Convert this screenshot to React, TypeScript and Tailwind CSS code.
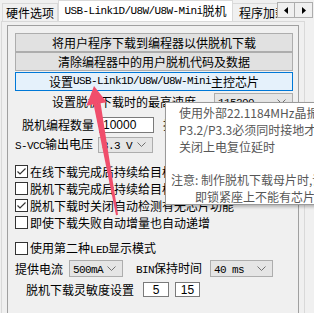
import React from "react";

const CJK = "font-['Noto_Sans_CJK_SC','Noto_Sans',sans-serif]";
const MONO = "font-['Liberation_Mono',monospace]";

function Mono({ children }: { children: React.ReactNode }) {
  return <span className={`${MONO} text-[11px] tracking-[-0.6px]`}>{children}</span>;
}

function Chevron() {
  return (
    <svg width="9" height="6" viewBox="0 0 9 6" className="shrink-0">
      <polyline points="0.5,0.5 4.5,4.5 8.5,0.5" fill="none" stroke="#707070" strokeWidth="1" />
    </svg>
  );
}

function Combo({ children, className }: { children: React.ReactNode; className: string }) {
  return (
    <div
      className={`flex items-center justify-between border border-[#adadad] bg-[#e5e5e5] pl-[3px] pr-[6px] ${className}`}
    >
      <span className="leading-none">{children}</span>
      <Chevron />
    </div>
  );
}

function Check({ checked, label }: { checked?: boolean; label: React.ReactNode }) {
  return (
    <div className="flex h-[17px] items-center gap-[2px] whitespace-nowrap">
      <div className="flex h-[13px] w-[13px] shrink-0 items-center justify-center border border-[#333333] bg-white">
        {checked && (
          <svg width="11" height="11" viewBox="0 0 11 11">
            <polyline points="1.5,5.5 4,8 9.5,2.5" fill="none" stroke="#333333" strokeWidth="1.2" />
          </svg>
        )}
      </div>
      <span>{label}</span>
    </div>
  );
}

function Btn({ children, active, className = "" }: { children: React.ReactNode; active?: boolean; className?: string }) {
  return (
    <div
      className={`flex h-[19px] items-center justify-center border whitespace-nowrap ${
        active ? "border-[#0078d7] bg-[#e5f1fb]" : "border-[#adadad] bg-[#e1e1e1]"
      } ${className}`}
    >
      {children}
    </div>
  );
}

export default function App() {
  return (
    <div className={`relative h-[313px] w-[314px] overflow-hidden bg-[#f0f0f0] text-[12px] leading-none text-black ${CJK}`}>
      {/* tab strip */}
      <div className="flex h-[21px] items-end pl-[2px]">
        <div className="flex h-[18px] w-[56px] items-center justify-center border border-b-0 border-[#d9d9d9] bg-[#f0f0f0]">
          硬件选项
        </div>
        <div className="flex h-[21px] w-[175px] items-center justify-center border border-b-0 border-[#d9d9d9] bg-white whitespace-nowrap">
          <Mono>USB-Link1D/U8W/U8W-Mini</Mono>
          <span>脱机</span>
        </div>
        <div className="flex h-[18px] w-[44px] items-center overflow-hidden border-t border-[#d9d9d9] bg-[#f0f0f0] pl-[6px] whitespace-nowrap">
          程序加载
        </div>
        <div className="mb-[3px] flex h-[16px] self-end">
          <div className="flex w-[18px] items-center justify-center border border-[#adadad] bg-[#f0f0f0]">
            <svg width="4" height="7" viewBox="0 0 4 7"><polygon points="4,0 0,3.5 4,7" fill="#000" /></svg>
          </div>
          <div className="flex w-[18px] items-center justify-center border border-l-0 border-[#adadad] bg-[#f0f0f0]">
            <svg width="4" height="7" viewBox="0 0 4 7"><polygon points="0,0 4,3.5 0,7" fill="#000" /></svg>
          </div>
        </div>
      </div>

      {/* tab page */}
      <div className="ml-[1px] h-[300px] w-[304px] border border-[#d9d9d9] bg-[#f0f0f0] pl-[5px] pr-[5px] pt-[3px]">
        <div className="h-full border-l border-r border-t border-[#a0a0a0] pl-[7px] pr-[5px] pt-[7px]">
          <Btn>将用户程序下载到编程器以供脱机下载</Btn>
          <Btn>清除编程器中的用户脱机代码及数据</Btn>
          <Btn active className="mt-[1px]">
            <span>设置</span>
            <Mono>USB-Link1D/U8W/U8W-Mini</Mono>
            <span>主控芯片</span>
          </Btn>

          <div className="mt-[2px] flex h-[18px] items-center pl-[37px] whitespace-nowrap">
            <span>设置脱机下载时的最高速度</span>
            <Combo className="ml-[18px] h-[18px] w-[79px]">
              <Mono>115200</Mono>
            </Combo>
          </div>

          <div className="mt-[6px] flex h-[16px] items-center gap-[5px] pl-[7px] whitespace-nowrap">
            <span>脱机编程数量</span>
            <div className="flex h-[16px] w-[55px] items-center border border-[#7a7a7a] bg-white pl-[3px] font-['Liberation_Sans',sans-serif]">
              10000
            </div>
            <span className="ml-[4px]">指</span>
          </div>

          <div className="mt-[4px] flex h-[16px] items-center gap-[5px] whitespace-nowrap">
            <span>
              <Mono>S-VCC</Mono>输出电压
            </span>
            <Combo className="h-[16px] w-[55px]">
              <Mono>3.3 V</Mono>
            </Combo>
          </div>

          <div className="mt-[10px]">
            <Check checked label="在线下载完成后持续给目标芯片供电" />
            <Check label="脱机下载完成后持续给目标芯片供电" />
            <Check checked label="脱机下载时关闭自动检测有无芯片功能" />
            <Check label="即使下载失败自动增量也自动递增" />
            <div className="mt-[9px]">
              <Check
                label={
                  <>
                    使用第二种<Mono>LED</Mono>显示模式
                  </>
                }
              />
            </div>
          </div>

          <div className="mt-[3px] flex h-[17px] items-center whitespace-nowrap">
            <span>提供电流</span>
            <Combo className="ml-[6px] h-[17px] w-[54px]">
              <Mono>500mA</Mono>
            </Combo>
            <span className="ml-[13px]">
              <Mono>BIN</Mono>保持时间
            </span>
            <Combo className="ml-[8px] h-[17px] w-[63px]">
              <Mono>40 ms</Mono>
            </Combo>
          </div>

          <div className="mt-[5px] flex h-[15px] items-center pl-[11px] whitespace-nowrap">
            <span>脱机下载灵敏度设置</span>
            <div className="ml-[9px] flex h-[15px] w-[26px] items-center justify-center border border-[#7a7a7a] bg-white font-['Liberation_Sans',sans-serif]">
              5
            </div>
            <div className="ml-[6px] flex h-[15px] w-[25px] items-center justify-center border border-[#7a7a7a] bg-white font-['Liberation_Sans',sans-serif]">
              15
            </div>
          </div>
        </div>
      </div>

      {/* tooltip */}
      <div className="absolute left-[165px] top-[102px] h-[103px] w-[170px] border border-[#9a9a9a] bg-white pt-[1px] text-[#575757] shadow-[2px_2px_3px_rgba(0,0,0,0.25)] whitespace-nowrap">
        <div className="pl-[13px] leading-[17px]">
          <div>使用外部22.1184MHz晶振时</div>
          <div>P3.2/P3.3必须同时接地才能</div>
          <div>关闭上电复位延时</div>
        </div>
        <div className="mt-[16px] pl-[5px] leading-[17px]">注意: 制作脱机下载母片时,请</div>
        <div className="pl-[29px] leading-[17px]">即锁紧座上不能有芯片</div>
      </div>

      {/* red arrow */}
      <svg className="pointer-events-none absolute left-0 top-0" width="314" height="313" viewBox="0 0 314 313">
        <polygon points="94,86 86.5,105.5 106.8,102.3" fill="#f04e6c" />
        <polygon points="93.5,104 100.5,102.8 118,214.8 116,215.2" fill="#f04e6c" />
      </svg>
    </div>
  );
}
